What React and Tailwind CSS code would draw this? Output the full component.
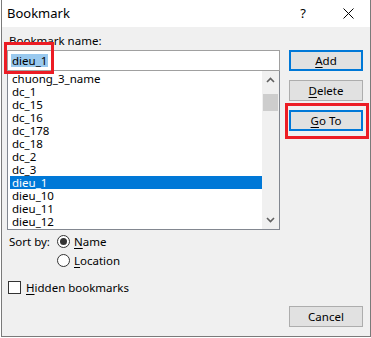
import React from 'react';

const items = [
  'chuong_3_name',
  'dc_1',
  'dc_15',
  'dc_16',
  'dc_178',
  'dc_18',
  'dc_2',
  'dc_3',
  'dieu_1',
  'dieu_10',
  'dieu_11',
  'dieu_12',
];

const font = { fontFamily: '"Noto Sans", "Open Sans", sans-serif' };

function Key({ children }) {
  return <span className="underline underline-offset-[2px]">{children}</span>;
}

function Button({ children, primary }) {
  return (
    <div
      className={
        'flex h-[21px] w-[74px] items-center justify-center bg-[#e1e1e1] text-[11.5px] text-black ' +
        (primary ? 'border-2 border-[#0078d7]' : 'border border-[#adadad]')
      }
    >
      {children}
    </div>
  );
}

function Radio({ checked, children }) {
  return (
    <div className="flex h-[19px] items-center">
      <span className="flex h-[13px] w-[13px] items-center justify-center rounded-full border border-[#333] bg-white">
        {checked ? <span className="h-[7px] w-[7px] rounded-full bg-[#333]" /> : null}
      </span>
      <span className="ml-[4px]">{children}</span>
    </div>
  );
}

export default function App() {
  return (
    <div className="h-[338px] w-[371px] overflow-hidden bg-white pl-[1px]" style={font}>
      <div className="relative flex h-[337px] w-[370px] flex-col border-x border-b border-[#7a7a7a] bg-[#f0f0f0] text-[11.5px] text-black">
        {/* title bar */}
        <div className="flex h-[27px] shrink-0 items-center bg-white pl-[5px]">
          <span className="text-[13px] leading-none">Bookmark</span>
          <span className="ml-auto mr-[37px] text-[13px] leading-none">?</span>
          <svg width="11" height="11" viewBox="0 0 11 11" className="mr-[16px]">
            <path d="M0.5 0.5 L10.5 10.5 M10.5 0.5 L0.5 10.5" stroke="#000" strokeWidth="1" />
          </svg>
        </div>

        <div className="flex flex-1 pl-[5px] pr-[7px]">
          {/* left column */}
          <div className="flex w-[273px] flex-col pt-[5px]">
            <div className="h-[18px] pl-[2px] leading-[17px]">Bookmark name:</div>
            <div className="flex h-[21px] items-center border border-[#a0a0a0] bg-white pl-[3px]">
              <span className="inline-block h-[13px] bg-[#99c9ef] px-[1px] leading-[13px]">dieu_1</span>
            </div>
            <div className="flex h-[159px] border-x border-b border-[#828790] bg-white">
              <div className="w-[254px] py-[1px] pl-[2px]">
                {items.map((item) => (
                  <div
                    key={item}
                    className={
                      'h-[13px] pl-[2px] leading-[13px] ' +
                      (item === 'dieu_1' ? 'bg-[#0078d7] text-white' : '')
                    }
                  >
                    {item}
                  </div>
                ))}
              </div>
              <div className="flex w-[17px] flex-col bg-[#f0f0f0]">
                <div className="flex h-[18px] items-center justify-center">
                  <svg width="9" height="6" viewBox="0 0 9 6">
                    <path d="M1 5 L4.5 1.5 L8 5" fill="none" stroke="#606060" strokeWidth="1.6" />
                  </svg>
                </div>
                <div className="mx-[1px] mt-[5px] h-[17px] bg-[#cdcdcd]" />
                <div className="mt-auto flex h-[18px] items-center justify-center">
                  <svg width="9" height="6" viewBox="0 0 9 6">
                    <path d="M1 1 L4.5 4.5 L8 1" fill="none" stroke="#606060" strokeWidth="1.6" />
                  </svg>
                </div>
              </div>
            </div>

            <div className="mt-[2px] flex pl-[2px]">
              <div className="flex h-[19px] w-[48px] items-center">Sort by:</div>
              <div className="flex flex-col">
                <Radio checked>
                  <Key>N</Key>ame
                </Radio>
                <Radio>
                  <Key>L</Key>ocation
                </Radio>
              </div>
            </div>

            <div className="mt-[8px] flex h-[19px] items-center pl-[1px]">
              <span className="h-[13px] w-[13px] border border-[#333] bg-white" />
              <span className="ml-[5px]">
                <Key>H</Key>idden bookmarks
              </span>
            </div>
          </div>

          {/* right column */}
          <div className="ml-[9px] flex flex-col pb-[9px] pt-[23px]">
            <Button primary>
              <Key>A</Key>dd
            </Button>
            <div className="mt-[9px]">
              <Button>
                <Key>D</Key>elete
              </Button>
            </div>
            <div className="mt-[9px]">
              <Button primary>
                <Key>G</Key>o To
              </Button>
            </div>
            <div className="mt-auto">
              <Button>Cancel</Button>
            </div>
          </div>
        </div>

        {/* red highlight boxes */}
        <div className="pointer-events-none absolute left-[2px] top-[42px] h-[32px] w-[50px] border-[3px] border-[#ec1c24]" />
        <div className="pointer-events-none absolute left-[283px] top-[103px] h-[36px] w-[84px] border-[3px] border-[#ec1c24]" />
      </div>
    </div>
  );
}
